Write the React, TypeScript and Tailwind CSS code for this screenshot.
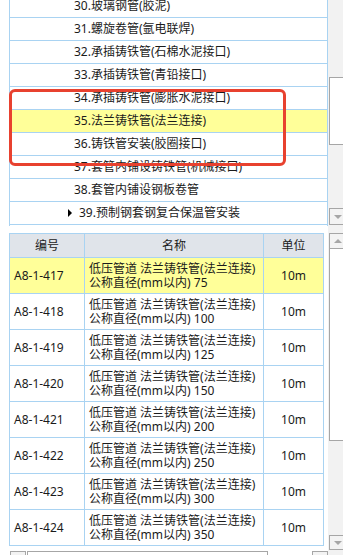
const line = "border-[#a9d3f2]"

const treeRows = [
  "30.玻璃钢管(胶泥)",
  "31.螺旋卷管(氩电联焊)",
  "32.承插铸铁管(石棉水泥接口)",
  "33.承插铸铁管(青铅接口)",
  "34.承插铸铁管(膨胀水泥接口)",
  "35.法兰铸铁管(法兰连接)",
  "36.铸铁管安装(胶圈接口)",
  "37.套管内铺设铸铁管(机械接口)",
  "38.套管内铺设钢板卷管",
]

const quotaRows = [
  { code: "A8-1-417", dn: "75" },
  { code: "A8-1-418", dn: "100" },
  { code: "A8-1-419", dn: "125" },
  { code: "A8-1-420", dn: "150" },
  { code: "A8-1-421", dn: "200" },
  { code: "A8-1-422", dn: "250" },
  { code: "A8-1-423", dn: "300" },
  { code: "A8-1-424", dn: "350" },
]

function ArrowBox({ up, className }: { up?: boolean; className: string }) {
  return (
    <div
      className={`ml-[1px] flex w-[17px] shrink-0 items-center justify-center border border-[#a6a6a6] bg-[#f3f3f3] ${className}`}
    >
      {up ? (
        <div className="h-0 w-0 border-x-[4px] border-b-[4px] border-x-transparent border-b-[#a6a6a6]" />
      ) : (
        <div className="h-0 w-0 border-x-[4px] border-t-[4px] border-x-transparent border-t-[#a6a6a6]" />
      )}
    </div>
  )
}

export default function App() {
  return (
    <div
      className="relative flex h-[555px] w-[343px] overflow-hidden bg-white text-[12px] text-[#1b1b1b]"
      style={{ fontFamily: '"Noto Sans", "Noto Sans CJK SC", sans-serif' }}
    >
      {/* main column */}
      <div className="flex w-[328px] shrink-0 flex-col">
        {/* tree list */}
        <div className="flex h-[226px] shrink-0 pl-[9px]">
          <div className={`w-[319px] overflow-hidden border-x ${line}`}>
            <div className="-mt-[5px]">
              {treeRows.map((t, i) => (
                <div
                  key={t}
                  className={`flex h-[23px] items-center border-b pl-[64px] ${line} ${
                    i === 5 ? "bg-[#ffff99]" : ""
                  }`}
                >
                  {t}
                </div>
              ))}
              <div className={`flex h-[23px] items-center border-b pl-[58px] ${line}`}>
                <div className="h-0 w-0 border-y-[4px] border-l-[4px] border-y-transparent border-l-black" />
                <span className="ml-[7px]">39.预制钢套钢复合保温管安装</span>
              </div>
            </div>
          </div>
        </div>

        <div className="h-[7px] shrink-0" />

        {/* quota table */}
        <div className="flex shrink-0 pl-[9px]">
          <div className={`border-l border-t ${line}`}>
            <div className={`flex h-[24px] border-b bg-[#e0e4ea] ${line}`}>
              <div className={`flex w-[75px] items-center justify-center border-r ${line}`}>编号</div>
              <div className={`flex w-[179px] items-center justify-center border-r ${line}`}>名称</div>
              <div className={`flex w-[60px] items-center justify-center border-r ${line}`}>单位</div>
            </div>
            {quotaRows.map((r, i) => (
              <div
                key={r.code}
                className={`flex h-[36px] border-b ${line} ${i === 0 ? "bg-[#ffff99]" : ""}`}
              >
                <div className={`flex w-[75px] items-center border-r pl-[4px] ${line}`}>{r.code}</div>
                <div className={`flex w-[179px] flex-col justify-center border-r pl-[4px] leading-[14px] ${line}`}>
                  <span>低压管道 法兰铸铁管(法兰连接)</span>
                  <span>公称直径(mm以内) {r.dn}</span>
                </div>
                <div className={`flex w-[60px] items-center justify-center border-r ${line}`}>10m</div>
              </div>
            ))}
          </div>
          <div className="flex-1" />
        </div>

        {/* horizontal scrollbar */}
        <div className="flex shrink-0 pl-[10px] pt-[5px]">
          <div className="h-[16px] w-[16px] border border-[#a6a6a6] bg-[#f3f3f3]" />
          <div className="ml-[1px] h-[16px] w-[241px] border border-[#a6a6a6] bg-white" />
          <div className="ml-[44px] h-[16px] w-[16px] border border-[#a6a6a6] bg-[#f3f3f3]" />
        </div>
      </div>

      {/* vertical scrollbars */}
      <div className="flex w-[15px] shrink-0 flex-col overflow-hidden bg-[#f2f2f2]">
        <div className="h-[77px] shrink-0" />
        <div className="ml-[1px] h-[68px] w-[17px] shrink-0 border border-[#a6a6a6] bg-white" />
        <div className="h-[63px] shrink-0" />
        <ArrowBox className="h-[17px]" />
        <div className="h-[8px] shrink-0" />
        <ArrowBox up className="h-[16px]" />
        <div className="ml-[1px] h-[192px] w-[17px] shrink-0 border border-t-0 border-[#a6a6a6] bg-white" />
        <div className="h-[94px] shrink-0" />
        <ArrowBox className="h-[15px]" />
      </div>

      {/* red highlight */}
      <div className="absolute left-[9px] top-[89px] h-[77px] w-[277px] rounded-[6px] border-[3px] border-[#e8412f]" />
    </div>
  )
}
